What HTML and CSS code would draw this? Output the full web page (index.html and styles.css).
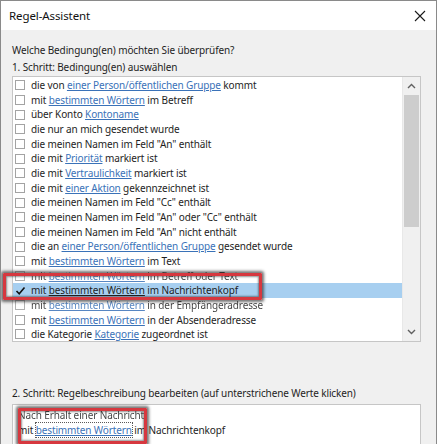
FILE: index.html
```html
<!DOCTYPE html>
<html lang="de">
<head>
<meta charset="utf-8">
<title>Regel-Assistent</title>
<link rel="stylesheet" href="styles.css">
</head>
<body>
<div class="window">
  <div class="titlebar">
    <span class="title">Regel-Assistent</span>
    <svg class="close" width="12" height="12" viewBox="0 0 12 12"><path d="M1 1 L11 11 M11 1 L1 11" stroke="#1a1a1a" stroke-width="1.1" fill="none"/></svg>
  </div>
  <div class="content">
    <div class="label q">Welche Bedingung(en) möchten Sie überprüfen?</div>
    <div class="label">1. Schritt: Bedingung(en) auswählen</div>
    <div class="listbox">
      <div class="list">
        <div class="row"><span class="cb"></span><span>die von <a>einer Person/öffentlichen Gruppe</a> kommt</span></div>
        <div class="row"><span class="cb"></span><span>mit <a>bestimmten Wörtern</a> im Betreff</span></div>
        <div class="row"><span class="cb"></span><span>über Konto <a>Kontoname</a></span></div>
        <div class="row"><span class="cb"></span><span>die nur an mich gesendet wurde</span></div>
        <div class="row"><span class="cb"></span><span>die meinen Namen im Feld "An" enthält</span></div>
        <div class="row"><span class="cb"></span><span>die mit <a>Priorität</a> markiert ist</span></div>
        <div class="row"><span class="cb"></span><span>die mit <a>Vertraulichkeit</a> markiert ist</span></div>
        <div class="row"><span class="cb"></span><span>die mit <a>einer Aktion</a> gekennzeichnet ist</span></div>
        <div class="row"><span class="cb"></span><span>die meinen Namen im Feld "Cc" enthält</span></div>
        <div class="row"><span class="cb"></span><span>die meinen Namen im Feld "An" oder "Cc" enthält</span></div>
        <div class="row"><span class="cb"></span><span>die meinen Namen im Feld "An" nicht enthält</span></div>
        <div class="row"><span class="cb"></span><span>die an <a>einer Person/öffentlichen Gruppe</a> gesendet wurde</span></div>
        <div class="row"><span class="cb"></span><span>mit <a>bestimmten Wörtern</a> im Text</span></div>
        <div class="row blur"><span class="cb"></span><span>mit <a>bestimmten Wörtern</a> im Betreff oder Text</span></div>
        <div class="row selected"><span class="cb checked"><svg width="11" height="10" viewBox="0 0 11 10"><path d="M1.5 5 L4.2 7.8 L9.5 1.5" stroke="#111" stroke-width="1.6" fill="none"/></svg></span><span>mit <a>bestimmten Wörtern</a> im Nachrichtenkopf</span></div>
        <div class="row blur"><span class="cb"></span><span>mit <a>bestimmten Wörtern</a> in der Empfängeradresse</span></div>
        <div class="row"><span class="cb"></span><span>mit <a>bestimmten Wörtern</a> in der Absenderadresse</span></div>
        <div class="row"><span class="cb"></span><span>die Kategorie <a>Kategorie</a> zugeordnet ist</span></div>
        <div class="highlight-box hb1"></div>
      </div>
      <div class="scrollbar">
        <div class="arrow up"><svg width="9" height="6" viewBox="0 0 9 6"><path d="M1 5 L4.5 1.5 L8 5" stroke="#606060" stroke-width="1.4" fill="none"/></svg></div>
        <div class="thumb"></div>
        <div class="track"></div>
        <div class="arrow down"><svg width="9" height="6" viewBox="0 0 9 6"><path d="M1 1 L4.5 4.5 L8 1" stroke="#606060" stroke-width="1.4" fill="none"/></svg></div>
      </div>
    </div>
    <div class="label step2">2. Schritt: Regelbeschreibung bearbeiten (auf unterstrichene Werte klicken)</div>
    <div class="desc">
      <div class="dline blur">Nach Erhalt einer Nachricht</div>
      <div class="dline">mit <a class="focus">bestimmten Wörtern</a> im Nachrichtenkopf</div>
      <div class="highlight-box hb2"></div>
    </div>
  </div>
</div>
</body>
</html>
```
FILE: styles.css
```css
html, body {
  margin: 0;
  padding: 0;
  background: #f0f0f0;
}
body {
  font-family: "Noto Sans", "Open Sans", sans-serif;
  font-size: 10px;
  letter-spacing: -0.12px;
  color: #1e1e1e;
}
.window {
  box-sizing: border-box;
  width: 437px;
  height: 444px;
  border: 1px solid #8a8a8a;
  border-bottom: none;
  overflow: hidden;
  background: #f0f0f0;
}
.titlebar {
  height: 29px;
  background: #fff;
  display: flex;
  align-items: center;
  justify-content: space-between;
  padding: 0 10px 0 8px;
}
.title {
  font-size: 11.5px;
  letter-spacing: -0.1px;
  color: #111;
}
.close {
  display: block;
}
.content {
  padding: 12px 15px 0 11px;
}
.label {
  line-height: 17px;
  height: 17px;
  white-space: nowrap;
}
.listbox {
  height: 266px;
  box-sizing: border-box;
  border: 1px solid #c6c6c6;
  background: #fff;
  display: flex;
}
.list {
  flex: 1;
  padding-top: 1px;
  position: relative;
}
.row {
  height: 14.67px;
  line-height: 14.67px;
  display: flex;
  align-items: center;
  white-space: nowrap;
  padding-left: 2px;
}
.row > span:last-child {
  margin-left: 6px;
}
.cb {
  box-sizing: border-box;
  width: 10px;
  height: 10px;
  border: 1px solid #a3a3a3;
  background: #fff;
  flex: none;
  display: flex;
  align-items: center;
  justify-content: center;
}
.cb.checked {
  border-color: transparent;
  background: transparent;
}
.cb svg {
  display: block;
  flex: none;
}
a {
  color: #3a72b8;
  text-decoration: underline;
  text-decoration-thickness: 1px;
  text-underline-offset: 1px;
}
.selected {
  background: #a7cff0;
}
.selected a {
  color: #1e1e1e;
}
.blur {
  filter: blur(0.7px);
  opacity: 0.85;
}
.scrollbar {
  width: 17px;
  display: flex;
  flex-direction: column;
  background: #f0f0f0;
  border-left: 1px solid #e8e8e8;
}
.arrow {
  height: 18px;
  display: flex;
  align-items: center;
  justify-content: center;
}
.thumb {
  height: 132px;
  margin: 0 1px;
  background: #cdcdcd;
}
.track {
  flex: 1;
}
.highlight-box {
  position: absolute;
  box-sizing: border-box;
  border: 3px solid #d6383f;
  border-radius: 1px;
  box-shadow: 0 0 3px 2px rgba(40, 40, 40, 0.65), inset 0 0 2px 1px rgba(40, 40, 40, 0.5);
}
.hb1 {
  left: -10px;
  top: 196px;
  width: 259px;
  height: 27px;
}
.step2 {
  margin-top: 43px;
}
.desc {
  margin-top: 2px;
  height: 60px;
  box-sizing: border-box;
  border: 1px solid #c6c6c6;
  background: #fff;
  padding: 3px 0 0 5px;
  position: relative;
}
.dline {
  line-height: 15px;
  white-space: nowrap;
}
.focus {
  outline: 1px dotted #5a5a5a;
  outline-offset: 0;
}
.hb2 {
  left: 5px;
  top: 3px;
  width: 129px;
  height: 36px;
}
```
